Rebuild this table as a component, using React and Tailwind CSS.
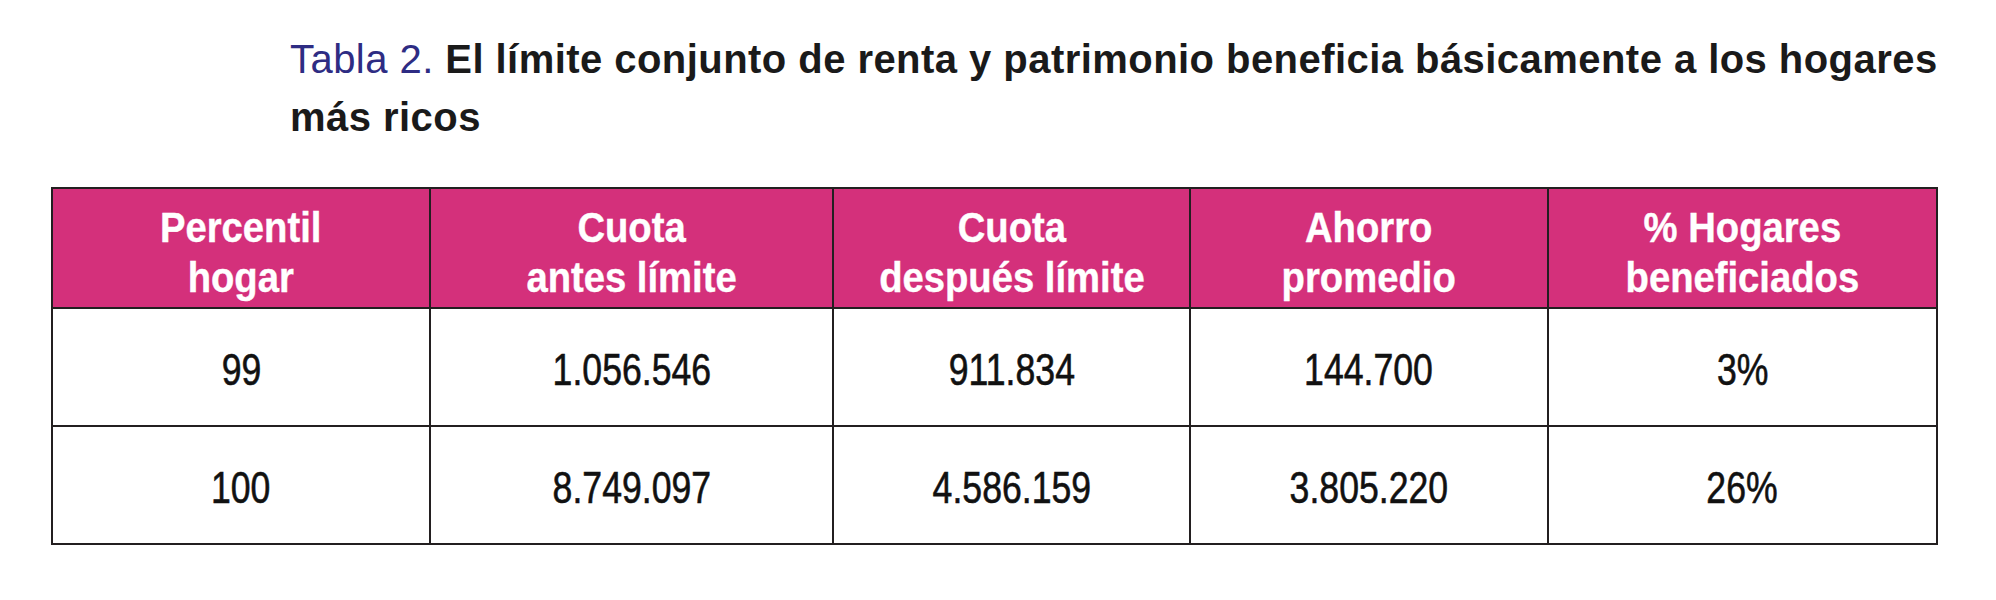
import React from 'react';

const columns = [
  { label: ['Percentil', 'hogar'], width: 'w-[378px]' },
  { label: ['Cuota', 'antes límite'], width: 'w-[403px]' },
  { label: ['Cuota', 'después límite'], width: 'w-[357px]' },
  { label: ['Ahorro', 'promedio'], width: 'w-[358px]' },
  { label: ['% Hogares', 'beneficiados'], width: 'w-[389px]' },
];

const rows = [
  ['99', '1.056.546', '911.834', '144.700', '3%'],
  ['100', '8.749.097', '4.586.159', '3.805.220', '26%'],
];

const App = () => {
  return (
    <div className="w-[1996px] h-[600px] bg-white pt-[30px] pl-[51px] font-['Liberation_Sans',Arial,sans-serif]">
      {/* Caption */}
      <div className="ml-[239px] w-[1670px] text-[40px] leading-[58px] tracking-[0.45px]">
        <span className="text-[#2e2c83]">Tabla 2. </span>
        <span className="font-bold text-[#1a1a1a]">
          El límite conjunto de renta y patrimonio beneficia básicamente a los hogares más ricos
        </span>
      </div>

      {/* Table */}
      <table className="mt-[41px] table-fixed border-collapse border-2 border-[#231f20]">
        <thead>
          <tr className="bg-[#d4307b] text-white">
            {columns.map((col, i) => (
              <th
                key={i}
                className={`${col.width} h-[120px] pt-[10px] border-2 border-[#231f20] text-center align-middle font-bold text-[42px] leading-[50px]`}
              >
                <span className="inline-block scale-x-[0.91] [-webkit-text-stroke:0.4px_white]">
                  {col.label[0]}
                  <br />
                  {col.label[1]}
                </span>
              </th>
            ))}
          </tr>
        </thead>
        <tbody>
          {rows.map((row, r) => (
            <tr key={r}>
              {row.map((cell, c) => (
                <td
                  key={c}
                  className="h-[118px] pt-[6px] border-2 border-[#231f20] text-center align-middle text-[44px] text-[#111]"
                >
                  <span className="inline-block scale-x-[0.81] [-webkit-text-stroke:0.6px_#111]">{cell}</span>
                </td>
              ))}
            </tr>
          ))}
        </tbody>
      </table>
    </div>
  );
};

export default App;
